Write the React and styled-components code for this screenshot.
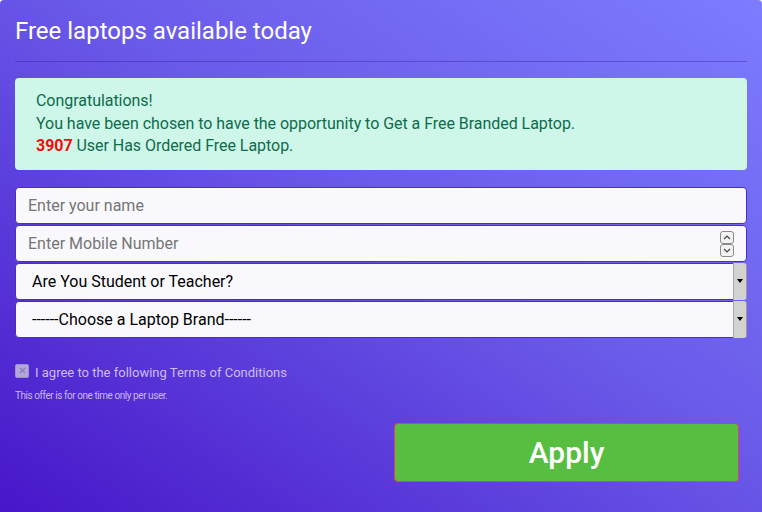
import React from 'react';
import styled, { createGlobalStyle } from 'styled-components';

const GlobalStyle = createGlobalStyle`
  html, body {
    margin: 0;
    padding: 0;
    background: #ffffff;
    font-family: Roboto, "Liberation Sans", sans-serif;
  }
  * { box-sizing: border-box; }
`;

const Card = styled.div`
  width: 762px;
  height: 512px;
  overflow: hidden;
  padding: 15px 15px 0;
  border-radius: 4px 4px 0 0;
  background: linear-gradient(to top right, #4716c9 0%, #6a5ae9 55%, #7d7cff 100%);
  color: #fff;
`;

const Title = styled.h1`
  margin: 0;
  padding-top: 2px;
  font-size: 24px;
  font-weight: 400;
  line-height: 28px;
`;

const Rule = styled.hr`
  margin: 16px 0 16px;
  border: 0;
  border-top: 1px solid rgba(40, 20, 140, 0.35);
`;

const Alert = styled.div`
  background: #cff7e9;
  border-radius: 4px;
  padding: 12px 21px 12px;
  color: #0e6b4c;
  font-size: 16px;
  letter-spacing: -0.04px;
  line-height: 22.5px;
  margin-bottom: 17px;
`;

const Count = styled.b`
  color: #f20d0d;
  font-weight: 700;
`;

const Fields = styled.div`
  display: flex;
  flex-direction: column;
  gap: 1px;
  width: 732px;
`;

const FieldBox = styled.div`
  position: relative;
  height: 37px;
  background: #f9f9fd;
  border: 1px solid #4a2fb8;
  border-radius: 4px;
  display: flex;
  align-items: center;
  padding-left: ${p => (p.$select ? '16px' : '12px')};
  font-size: 16px;
  color: ${p => (p.$select ? '#000' : '#757575')};
`;

const Spinner = styled.div`
  position: absolute;
  right: 12px;
  top: 5px;
  width: 14px;
  height: 26px;
  display: flex;
  flex-direction: column;
`;

const SpinButton = styled.div`
  flex: 1;
  border: 1px solid #8a8a8a;
  border-radius: 3px;
  background: #f4f4f4;
  display: flex;
  align-items: center;
  justify-content: center;
`;

const DropButton = styled.div`
  position: absolute;
  right: -1px;
  top: -1px;
  bottom: -1px;
  width: 14px;
  background: #d2d2d2;
  border-left: 1px solid #a8a8a8;
  border-right: 1px solid #9a9a9a;
  border-radius: 0 3px 3px 0;
  display: flex;
  align-items: center;
  justify-content: center;
`;

const Arrow = styled.span`
  width: 0;
  height: 0;
  border-left: 3px solid transparent;
  border-right: 3px solid transparent;
  border-top: 4px solid #000;
`;

const Agree = styled.label`
  display: flex;
  align-items: center;
  gap: 6px;
  margin-top: 27px;
  font-size: 13px;
  color: #cdbdf0;
`;

const Check = styled.span`
  width: 14px;
  height: 14px;
  border-radius: 2px;
  background: #b3a6da;
  border: 1px solid #9e90cc;
  display: flex;
  align-items: center;
  justify-content: center;
  margin-top: -3px;
`;

const Note = styled.p`
  margin: 10px 0 0;
  font-size: 10px;
  letter-spacing: -0.45px;
  color: #c9b8ee;
`;

const Actions = styled.div`
  display: flex;
  justify-content: flex-end;
  padding-right: 8px;
  margin-top: 22px;
`;

const ApplyButton = styled.button`
  width: 345px;
  height: 59px;
  background: #58be41;
  border: 1px solid #ec3c55;
  border-radius: 4px;
  color: #fff;
  font-family: Roboto, "Liberation Sans", sans-serif;
  font-size: 30px;
  font-weight: 500;
  cursor: pointer;
`;

const Chevron = ({ up }) => (
  <svg width="8" height="5" viewBox="0 0 8 5">
    <path d={up ? 'M1 4 L4 1 L7 4' : 'M1 1 L4 4 L7 1'} fill="none" stroke="#444" strokeWidth="1.2" />
  </svg>
);

export default function App() {
  return (
    <>
      <GlobalStyle />
      <Card>
        <Title>Free laptops available today</Title>
        <Rule />
        <Alert>
          Congratulations!
          <br />
          You have been chosen to have the opportunity to Get a Free Branded Laptop.
          <br />
          <Count>3907</Count> User Has Ordered Free Laptop.
        </Alert>
        <Fields>
          <FieldBox>Enter your name</FieldBox>
          <FieldBox>
            Enter Mobile Number
            <Spinner>
              <SpinButton><Chevron up /></SpinButton>
              <SpinButton><Chevron /></SpinButton>
            </Spinner>
          </FieldBox>
          <FieldBox $select>
            Are You Student or Teacher?
            <DropButton><Arrow /></DropButton>
          </FieldBox>
          <FieldBox $select>
            ------Choose a Laptop Brand------
            <DropButton><Arrow /></DropButton>
          </FieldBox>
        </Fields>
        <Agree>
          <Check>
            <svg width="7" height="7" viewBox="0 0 7 7">
              <path d="M1 1 L6 6 M6 1 L1 6" stroke="#8d80bd" strokeWidth="1.5" />
            </svg>
          </Check>
          I agree to the following Terms of Conditions
        </Agree>
        <Note>This offer is for one time only per user.</Note>
        <Actions>
          <ApplyButton>Apply</ApplyButton>
        </Actions>
      </Card>
    </>
  );
}
